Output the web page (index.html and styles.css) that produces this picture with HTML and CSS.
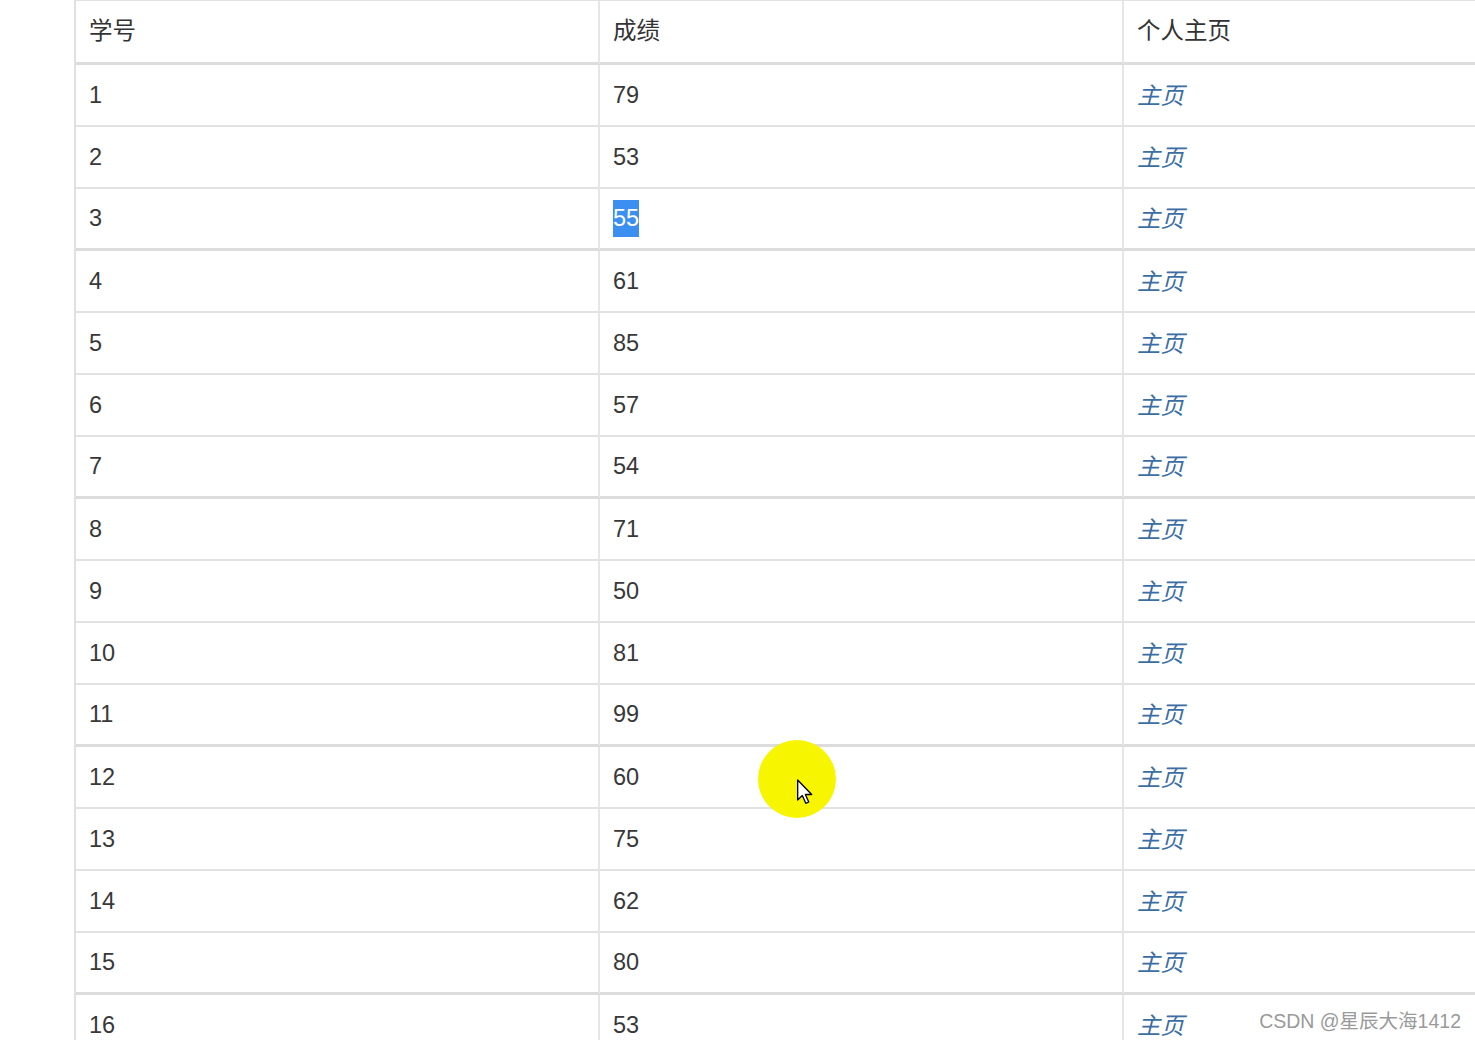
FILE: index.html
```html
<!DOCTYPE html>
<html lang="zh">
<head>
<meta charset="utf-8">
<title>成绩表</title>
<link rel="stylesheet" href="styles.css">
</head>
<body>
<div class="wrap">
  <table class="grades">
    <colgroup><col class="c1"><col class="c2"><col class="c3"></colgroup>
    <thead>
      <tr><th>学号</th><th>成绩</th><th>个人主页</th></tr>
    </thead>
    <tbody>
      <tr><td>1</td><td>79</td><td class="lk"><a href="#">主页</a></td></tr>
      <tr><td>2</td><td>53</td><td class="lk"><a href="#">主页</a></td></tr>
      <tr><td>3</td><td><span class="sel">55</span></td><td class="lk"><a href="#">主页</a></td></tr>
      <tr><td>4</td><td>61</td><td class="lk"><a href="#">主页</a></td></tr>
      <tr><td>5</td><td>85</td><td class="lk"><a href="#">主页</a></td></tr>
      <tr><td>6</td><td>57</td><td class="lk"><a href="#">主页</a></td></tr>
      <tr><td>7</td><td>54</td><td class="lk"><a href="#">主页</a></td></tr>
      <tr><td>8</td><td>71</td><td class="lk"><a href="#">主页</a></td></tr>
      <tr><td>9</td><td>50</td><td class="lk"><a href="#">主页</a></td></tr>
      <tr><td>10</td><td>81</td><td class="lk"><a href="#">主页</a></td></tr>
      <tr><td>11</td><td>99</td><td class="lk"><a href="#">主页</a></td></tr>
      <tr><td>12</td><td>60</td><td class="lk"><a href="#">主页</a></td></tr>
      <tr><td>13</td><td>75</td><td class="lk"><a href="#">主页</a></td></tr>
      <tr><td>14</td><td>62</td><td class="lk"><a href="#">主页</a></td></tr>
      <tr><td>15</td><td>80</td><td class="lk"><a href="#">主页</a></td></tr>
      <tr><td>16</td><td>53</td><td class="lk"><a href="#">主页</a></td></tr>
    </tbody>
  </table>
</div>
<div class="spot">
  <svg class="cursor" width="16" height="26" viewBox="0 0 12 19">
    <path d="M0.5 0.5 L0.5 15.5 L4 12.2 L6.6 18 L8.8 17 L6.3 11.4 L11 11.4 Z" fill="#fff" stroke="#000" stroke-width="1" stroke-linejoin="round"/>
  </svg>
</div>
<div class="watermark">CSDN @星辰大海1412</div>
</body>
</html>
```

FILE: styles.css
```css
html, body {
  margin: 0;
  padding: 0;
  background: #fff;
  overflow: hidden;
  height: 1040px;
}
body {
  font-family: "Liberation Sans", "Noto Sans CJK SC", sans-serif;
  color: #383838;
}
.wrap {
  padding-left: 74px;
}
.grades {
  width: 1401px;
  table-layout: fixed;
  border-collapse: separate;
  border-spacing: 0;
  border-top: 1px solid #e2e2e2;
  border-left: 2px solid #e0e0e0;
  font-size: 23.5px;
}
.c1, .c2 { width: 524px; }
.grades th,
.grades td {
  text-align: left;
  padding: 0 13px;
  vertical-align: middle;
  border-right: 2px solid #e6e6e6;
  box-sizing: border-box;
}
.grades th:last-child,
.grades td:last-child {
  border-right: 0;
}
.grades th {
  font-weight: normal;
  height: 64px;
  padding-bottom: 6px;
  border-bottom: 3px solid #dcdcdc;
  color: #333;
}
.grades td {
  height: 62px;
  border-bottom: 2px solid #e2e2e2;
}
.grades td.lk {
  padding-bottom: 3px;
}
.grades tbody tr:nth-child(4n+3) td {
  border-bottom: 3px solid #dcdcdc;
}
.grades a {
  color: #3b6fa3;
  font-style: italic;
  text-decoration: none;
}
.sel {
  background: #3a8ff0;
  color: #fff;
  padding: 5px 0 6px;
}
.spot {
  position: absolute;
  left: 758px;
  top: 740px;
  width: 78px;
  height: 78px;
  border-radius: 50%;
  background: #f7f500;
}
.cursor {
  position: absolute;
  left: 39px;
  top: 39px;
}
.watermark {
  position: absolute;
  right: 14px;
  top: 1005px;
  font-size: 19.5px;
  color: #9a9a9a;
}
```
